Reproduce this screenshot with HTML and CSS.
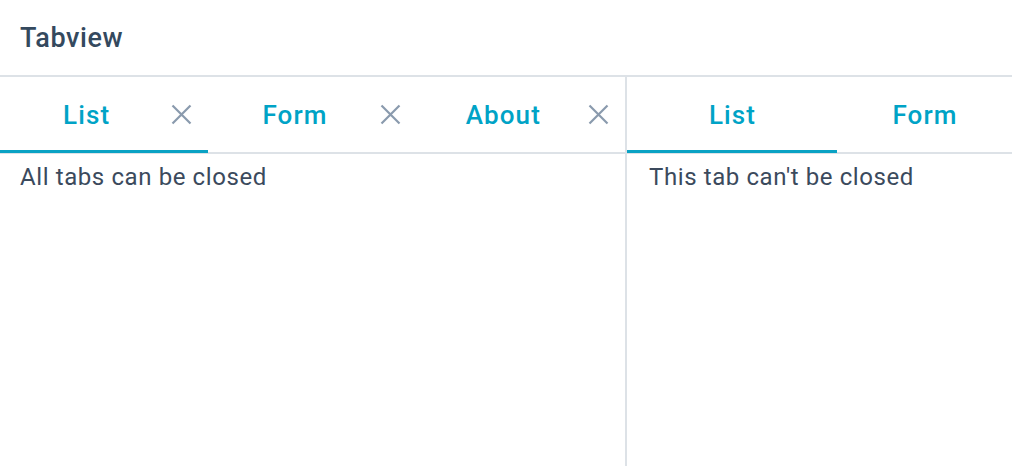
FILE: index.html
```html
<!DOCTYPE html>
<html>
<head>
<meta charset="utf-8">
<link rel="stylesheet" href="styles.css">
</head>
<body>
<div class="page">
  <header class="header">Tabview</header>
  <div class="panes">
    <section class="pane pane-left">
      <div class="tabbar">
        <div class="tab active"><span class="label">List</span><span class="close"><svg viewBox="0 0 21 21" width="21" height="21"><path d="M1.5 1.5 L19.5 19.5 M19.5 1.5 L1.5 19.5"/></svg></span></div>
        <div class="tab"><span class="label">Form</span><span class="close"><svg viewBox="0 0 21 21" width="21" height="21"><path d="M1.5 1.5 L19.5 19.5 M19.5 1.5 L1.5 19.5"/></svg></span></div>
        <div class="tab"><span class="label">About</span><span class="close"><svg viewBox="0 0 21 21" width="21" height="21"><path d="M1.5 1.5 L19.5 19.5 M19.5 1.5 L1.5 19.5"/></svg></span></div>
      </div>
      <div class="content">All tabs can be closed</div>
    </section>
    <section class="pane pane-right">
      <div class="tabbar">
        <div class="tab tab-fixed active"><span class="label">List</span></div>
        <div class="tab"><span class="label">Form</span></div>
      </div>
      <div class="content content-right">This tab can't be closed</div>
    </section>
  </div>
</div>
</body>
</html>
```

FILE: styles.css
```css
* { box-sizing: border-box; }
html, body { margin: 0; padding: 0; background: #fff; }
body {
  font-family: Roboto, "Liberation Sans", sans-serif;
  width: 1012px;
  height: 466px;
  overflow: hidden;
}
.page { display: flex; flex-direction: column; height: 466px; }
.header {
  height: 77px;
  flex: none;
  display: flex;
  align-items: center;
  padding-left: 20px;
  padding-top: 1px;
  font-size: 27px;
  font-weight: 500;
  letter-spacing: 0.6px;
  color: #34495e;
  border-bottom: 2px solid #dde2e7;
}
.panes { flex: 1; display: flex; min-height: 0; }
.pane { display: flex; flex-direction: column; min-width: 0; overflow: hidden; }
.pane-left { width: 627px; flex: none; border-right: 2px solid #dde2e7; }
.pane-right { flex: 1; }
.tabbar {
  height: 77px;
  flex: none;
  display: flex;
  border-bottom: 2px solid #dde2e7;
}
.tab {
  flex: 1;
  display: flex;
  align-items: center;
  position: relative;
  padding-right: 16px;
  min-width: 0;
}
.pane-right .tab { padding-right: 0; }
.tab-fixed { flex: none; width: 210px; }
.tab.active::after {
  content: "";
  position: absolute;
  left: 0; right: 0; bottom: -1px;
  height: 3px;
  background: #0aa2c4;
}
.label {
  flex: 1;
  text-align: center;
  font-size: 26px;
  font-weight: 500;
  letter-spacing: 1.1px;
  text-indent: 1px;
  color: #00a3c6;
  white-space: nowrap;
}
.close { width: 21px; height: 21px; flex: none; display: flex; margin-left: -1px; }
.close svg { display: block; }
.close path { stroke: #8a9aad; stroke-width: 2.2; fill: none; }
.content {
  padding: 9px 20px 0;
  font-size: 24px;
  line-height: 28px;
  color: #3b4a5d;
  letter-spacing: 0.6px;
}
.content-right { padding-left: 22px; }
```
